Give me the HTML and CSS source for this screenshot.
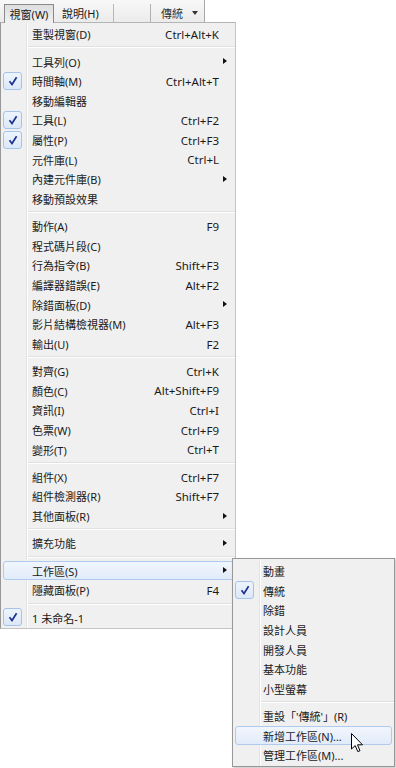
FILE: index.html
```html
<!DOCTYPE html>
<html>
<head>
    <title>視窗</title>
    <link rel="stylesheet" href="styles.css">
</head>
<body>
    <div class="bar">
        <span class="bar-item pressed">視窗(W)</span>
        <span class="bar-item help">說明(H)</span>
        <span class="bar-sep"></span>
        <span class="bar-gap"></span>
        <span class="bar-drop">傳統<span class="caret"></span></span>
    </div>

    <div class="menu">
        <div class="item"><span class="gut"></span><span class="label">重製視窗(D)</span><span class="key">Ctrl+Alt+K</span></div>
        <div class="sep"></div>
        <div class="item"><span class="gut"></span><span class="label">工具列(O)</span><span class="arrow"></span></div>
        <div class="item"><span class="gut"><span class="check"><svg width="10" height="10" viewBox="0 0 10 10"><path d="M1.5 5.2 L4 8.5 L8.6 1.2"/></svg></span></span><span class="label">時間軸(M)</span><span class="key">Ctrl+Alt+T</span></div>
        <div class="item"><span class="gut"></span><span class="label">移動編輯器</span></div>
        <div class="item"><span class="gut"><span class="check"><svg width="10" height="10" viewBox="0 0 10 10"><path d="M1.5 5.2 L4 8.5 L8.6 1.2"/></svg></span></span><span class="label">工具(L)</span><span class="key">Ctrl+F2</span></div>
        <div class="item"><span class="gut"><span class="check"><svg width="10" height="10" viewBox="0 0 10 10"><path d="M1.5 5.2 L4 8.5 L8.6 1.2"/></svg></span></span><span class="label">屬性(P)</span><span class="key">Ctrl+F3</span></div>
        <div class="item"><span class="gut"></span><span class="label">元件庫(L)</span><span class="key">Ctrl+L</span></div>
        <div class="item"><span class="gut"></span><span class="label">內建元件庫(B)</span><span class="arrow"></span></div>
        <div class="item"><span class="gut"></span><span class="label">移動預設效果</span></div>
        <div class="sep"></div>
        <div class="item"><span class="gut"></span><span class="label">動作(A)</span><span class="key">F9</span></div>
        <div class="item"><span class="gut"></span><span class="label">程式碼片段(C)</span></div>
        <div class="item"><span class="gut"></span><span class="label">行為指令(B)</span><span class="key">Shift+F3</span></div>
        <div class="item"><span class="gut"></span><span class="label">編譯器錯誤(E)</span><span class="key">Alt+F2</span></div>
        <div class="item"><span class="gut"></span><span class="label">除錯面板(D)</span><span class="arrow"></span></div>
        <div class="item"><span class="gut"></span><span class="label">影片結構檢視器(M)</span><span class="key">Alt+F3</span></div>
        <div class="item"><span class="gut"></span><span class="label">輸出(U)</span><span class="key">F2</span></div>
        <div class="sep"></div>
        <div class="item"><span class="gut"></span><span class="label">對齊(G)</span><span class="key">Ctrl+K</span></div>
        <div class="item"><span class="gut"></span><span class="label">顏色(C)</span><span class="key">Alt+Shift+F9</span></div>
        <div class="item"><span class="gut"></span><span class="label">資訊(I)</span><span class="key">Ctrl+I</span></div>
        <div class="item"><span class="gut"></span><span class="label">色票(W)</span><span class="key">Ctrl+F9</span></div>
        <div class="item"><span class="gut"></span><span class="label">變形(T)</span><span class="key">Ctrl+T</span></div>
        <div class="sep"></div>
        <div class="item"><span class="gut"></span><span class="label">組件(X)</span><span class="key">Ctrl+F7</span></div>
        <div class="item"><span class="gut"></span><span class="label">組件檢測器(R)</span><span class="key">Shift+F7</span></div>
        <div class="item"><span class="gut"></span><span class="label">其他面板(R)</span><span class="arrow"></span></div>
        <div class="sep"></div>
        <div class="item"><span class="gut"></span><span class="label">擴充功能</span><span class="arrow"></span></div>
        <div class="sep"></div>
        <div class="item hover"><span class="gut"></span><span class="label">工作區(S)</span><span class="arrow"></span></div>
        <div class="item"><span class="gut"></span><span class="label">隱藏面板(P)</span><span class="key">F4</span></div>
        <div class="sep"></div>
        <div class="item"><span class="gut"><span class="check"><svg width="10" height="10" viewBox="0 0 10 10"><path d="M1.5 5.2 L4 8.5 L8.6 1.2"/></svg></span></span><span class="label">1 未命名-1</span></div>
    </div>

    <div class="submenu">
        <div class="item"><span class="gut"></span><span class="label">動畫</span></div>
        <div class="item"><span class="gut"><span class="check"><svg width="10" height="10" viewBox="0 0 10 10"><path d="M1.5 5.2 L4 8.5 L8.6 1.2"/></svg></span></span><span class="label">傳統</span></div>
        <div class="item"><span class="gut"></span><span class="label">除錯</span></div>
        <div class="item"><span class="gut"></span><span class="label">設計人員</span></div>
        <div class="item"><span class="gut"></span><span class="label">開發人員</span></div>
        <div class="item"><span class="gut"></span><span class="label">基本功能</span></div>
        <div class="item"><span class="gut"></span><span class="label">小型螢幕</span></div>
        <div class="sep"></div>
        <div class="item"><span class="gut"></span><span class="label">重設「'傳統'」(R)</span></div>
        <div class="item hover"><span class="gut"></span><span class="label">新增工作區(N)...</span></div>
        <div class="item"><span class="gut"></span><span class="label">管理工作區(M)...</span></div>
    </div>

    <svg class="cursor" width="13" height="20" viewBox="0 0 13 20">
        <path d="M0.5 0.5 L0.5 16 L4.2 12.6 L6.8 18.6 L9 17.7 L6.5 11.8 L11.5 11.8 Z" fill="#fff" stroke="#000" stroke-width="1"/>
    </svg>
</body>
</html>
```

FILE: styles.css
```css
*{
    margin: 0;
    padding: 0;
    box-sizing: border-box;
}
body{
    width: 396px;
    height: 768px;
    position: relative;
    overflow: hidden;
    background: #fff;
    color: #1a1a1a;
    font: 11px "Noto Sans", "Noto Sans CJK TC", sans-serif;
}

/* top bar */
.bar{
    display: flex;
    width: 205px;
    height: 22px;
    background: linear-gradient(#f8f8f8, #ebebeb);
    border-right: 1px solid #a8a8a8;
}
.bar-item{
    height: 18px;
    margin-top: 4px;
    line-height: 19px;
    white-space: nowrap;
}
.pressed{
    width: 50px;
    margin-left: 4px;
    height: 19px;
    text-align: center;
    border: 1px solid #8a8a8a;
    border-bottom: 0;
    background: linear-gradient(#dedede, #eeeeee 80%, #f0f0f0);
    position: relative;
    z-index: 1;
}
.help{
    width: 59px;
    padding-left: 8px;
}
.bar-sep{
    width: 1px;
    margin-top: 4px;
    background: #b8b8b8;
}
.bar-gap{
    width: 36px;
}
.bar-drop{
    display: flex;
    align-items: center;
    width: 54px;
    margin-top: 4px;
    padding-left: 10px;
    border-left: 1px solid #b0b0b0;
    color: #333;
}
.caret{
    width: 0;
    height: 0;
    margin-left: 9px;
    border-top: 4px solid #333;
    border-left: 3px solid transparent;
    border-right: 3px solid transparent;
}

/* menus */
.menu{
    width: 236px;
    padding: 1px 0 1px;
    border: 1px solid #c4c4c4;
    border-left-color: #979797;
    border-top-color: #b4b4b4;
    background: linear-gradient(90deg, transparent 25px, #e2e3e3 25px, #e2e3e3 26px, #fff 26px, #fff 27px, transparent 27px), #f0f0f0;
}
.submenu{
    position: absolute;
    left: 232px;
    top: 558px;
    width: 163px;
    padding: 2px 0 1px;
    border: 1px solid #979797;
    background: linear-gradient(90deg, transparent 26px, #e2e3e3 26px, #e2e3e3 27px, #fff 27px, #fff 28px, transparent 28px), #f0f0f0;
    box-shadow: 1px 1px 2px rgba(0,0,0,0.25);
}
.item{
    display: flex;
    align-items: center;
    height: 19.6px;
    margin: 0 1px 0 2px;
    border: 1px solid transparent;
    border-radius: 3px;
    line-height: 1;
    white-space: nowrap;
}
.submenu .item{
    margin: 0 2px;
}
.item.hover{
    border-color: #aecbee;
    background: linear-gradient(#f1f6fd, #e1ebf9);
}
.gut{
    display: flex;
    align-items: center;
    width: 28px;
    height: 100%;
    flex: none;
}
.submenu .gut{
    width: 27px;
}
.check{
    display: flex;
    align-items: center;
    justify-content: center;
    width: 19px;
    height: 18px;
    margin-left: -1px;
    border: 1px solid #a6c3e9;
    border-radius: 3px;
    background: linear-gradient(#edf4fd, #dce8f8);
}
.check path{
    fill: none;
    stroke: #1d2f8f;
    stroke-width: 1.7;
}
.label{
    padding-top: 2px;
}
.key{
    margin-left: auto;
    margin-right: 14px;
    padding-top: 2px;
    font-size: 11.5px;
}
.arrow{
    width: 0;
    height: 0;
    margin-left: auto;
    margin-right: 6px;
    border-left: 4px solid #111;
    border-top: 3.5px solid transparent;
    border-bottom: 3.5px solid transparent;
}
.sep{
    height: 2px;
    margin: 2.9px 0 2.9px 27px;
    border-top: 1px solid #e0e0e0;
    border-bottom: 1px solid #fff;
}
.submenu .sep{
    margin-left: 28px;
}

.cursor{
    position: absolute;
    left: 351px;
    top: 733px;
}
```
